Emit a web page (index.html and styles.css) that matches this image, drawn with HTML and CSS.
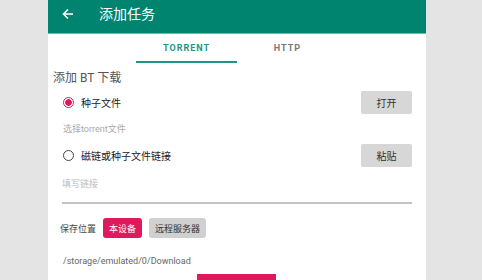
FILE: index.html
```html
<!DOCTYPE html>
<html lang="zh">
<head>
  <meta charset="UTF-8" />
  <meta name="viewport" content="width=device-width, initial-scale=1.0"/>
  <title>添加任务</title>
  <link rel="stylesheet" href="styles.css">
</head>
<body>
  <div class="screen">
    <!-- 顶栏 -->
    <div class="toolbar">
      <svg class="back" width="12" height="12" viewBox="0 0 12 12">
        <path d="M11 6H2M6 1.5L1.5 6 6 10.5" fill="none" stroke="#fff" stroke-width="1.6"/>
      </svg>
      <span class="title">添加任务</span>
    </div>

    <div class="tabs">
      <div class="tab active">TORRENT</div>
      <div class="tab">HTTP</div>
    </div>

    <div class="content">
      <h2>添加 BT 下载</h2>

      <div class="row">
        <span class="radio checked"></span>
        <span class="label">种子文件</span>
        <button class="btn">打开</button>
      </div>
      <div class="hint">选择torrent文件</div>

      <div class="row">
        <span class="radio"></span>
        <span class="label">磁链或种子文件链接</span>
        <button class="btn">粘贴</button>
      </div>
      <div class="field">填写链接</div>

      <div class="save">
        <span class="save-label">保存位置</span>
        <button class="chip pink">本设备</button>
        <button class="chip">远程服务器</button>
      </div>
      <div class="path">/storage/emulated/0/Download</div>

      <div class="submit"></div>
    </div>
  </div>
</body>
</html>
```

FILE: styles.css
```css
body {
  margin: 0;
  background-color: #e4e4e4;
  font-family: Roboto, "Noto Sans CJK SC", sans-serif;
  height: 280px;
  overflow: hidden;
}

.screen {
  margin-left: 48px;
  width: 378px;
  height: 280px;
  background-color: #fff;
}

.toolbar {
  height: 33px;
  background-color: #00836f;
  border-bottom: 1px solid #6fbcae;
  display: flex;
  align-items: center;
  padding-left: 14px;
}

.back {
  margin-right: 25px;
  margin-top: -6px;
}

.title {
  color: #fff;
  font-size: 14px;
  margin-top: -7px;
}

.tabs {
  display: flex;
  padding-left: 88px;
  height: 29px;
}

.tab {
  width: 101px;
  text-align: center;
  font-size: 9px;
  font-weight: bold;
  letter-spacing: 1px;
  color: #777;
  padding-top: 9px;
  box-sizing: border-box;
}

.tab.active {
  color: #1e9684;
  border-bottom: 2px solid #1e9684;
}

.content {
  padding: 5px 14px 0 5px;
}

h2 {
  margin: 0 0 6px 0;
  font-size: 12px;
  font-weight: normal;
  color: #555;
  height: 17px;
}

.row {
  display: flex;
  align-items: center;
  padding-left: 10px;
  height: 23px;
}

.radio {
  width: 9px;
  height: 9px;
  border: 1.5px solid #444;
  border-radius: 50%;
  margin-right: 7px;
}

.radio.checked {
  border-color: #d81b5e;
  background: radial-gradient(circle, #d81b5e 0 3px, #fff 3.5px);
}

.label {
  font-size: 10px;
  color: #222;
  flex: 1;
}

.btn {
  width: 51px;
  height: 23px;
  border: none;
  border-radius: 2px;
  background-color: #d7d7d7;
  font-family: inherit;
  font-size: 10px;
  color: #333;
}

.hint {
  font-size: 9px;
  color: #aaa;
  padding-left: 10px;
  height: 30px;
  line-height: 30px;
}

.field {
  margin: 2px 0 0 9px;
  font-size: 9px;
  color: #bbb;
  height: 33px;
  line-height: 31px;
  border-bottom: 2px solid #c4c4c4;
}

.save {
  display: flex;
  align-items: center;
  gap: 7px;
  padding-left: 7px;
  margin-top: 14px;
}

.save-label {
  font-size: 9px;
  color: #444;
}

.chip {
  height: 20px;
  border: none;
  border-radius: 3px;
  font-family: inherit;
  font-size: 9px;
  color: #333;
  background-color: #d0d0d0;
  padding: 0 6px;
}

.chip.pink {
  background-color: #e0185c;
  color: #fff;
}

.path {
  font-size: 9px;
  color: #666;
  padding-left: 10px;
  margin-top: 18px;
}

.submit {
  width: 79px;
  height: 10px;
  margin: 8px 0 0 144px;
  background-color: #e0185c;
}
```
